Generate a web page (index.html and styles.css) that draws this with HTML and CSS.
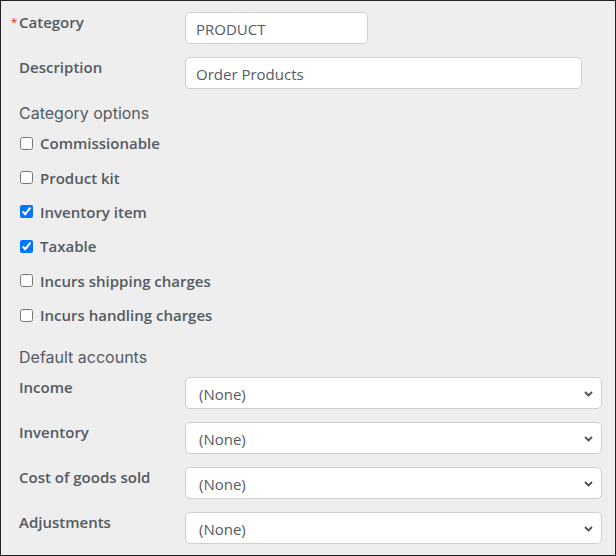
FILE: index.html
```html
<!DOCTYPE html>
<html lang="en">
<head>
<meta charset="utf-8">
<title>Category</title>
<link rel="stylesheet" href="styles.css">
</head>
<body>
<div class="panel">
  <div class="field">
    <label class="label required" for="cat">Category</label>
    <input id="cat" class="input input-short" type="text" value="PRODUCT">
  </div>
  <div class="field">
    <label class="label" for="desc">Description</label>
    <input id="desc" class="input input-long" type="text" value="Order Products">
  </div>

  <h3 class="section">Category options</h3>
  <ul class="checks">
    <li class="check"><input type="checkbox" id="c1"><label for="c1">Commissionable</label></li>
    <li class="check"><input type="checkbox" id="c2"><label for="c2">Product kit</label></li>
    <li class="check"><input type="checkbox" id="c3" checked><label for="c3">Inventory item</label></li>
    <li class="check"><input type="checkbox" id="c4" checked><label for="c4">Taxable</label></li>
    <li class="check"><input type="checkbox" id="c5"><label for="c5">Incurs shipping charges</label></li>
    <li class="check"><input type="checkbox" id="c6"><label for="c6">Incurs handling charges</label></li>
  </ul>

  <h3 class="section section-accounts">Default accounts</h3>
  <div class="field">
    <label class="label" for="s1">Income</label>
    <div class="select-wrap">
      <select id="s1" class="select"><option>(None)</option></select>
      <svg class="chev" width="9" height="6" viewBox="0 0 9 6"><path d="M1 1 L4.5 4.5 L8 1" fill="none" stroke="#4a4f57" stroke-width="1.8"/></svg>
    </div>
  </div>
  <div class="field">
    <label class="label" for="s2">Inventory</label>
    <div class="select-wrap">
      <select id="s2" class="select"><option>(None)</option></select>
      <svg class="chev" width="9" height="6" viewBox="0 0 9 6"><path d="M1 1 L4.5 4.5 L8 1" fill="none" stroke="#4a4f57" stroke-width="1.8"/></svg>
    </div>
  </div>
  <div class="field">
    <label class="label" for="s3">Cost of goods sold</label>
    <div class="select-wrap">
      <select id="s3" class="select"><option>(None)</option></select>
      <svg class="chev" width="9" height="6" viewBox="0 0 9 6"><path d="M1 1 L4.5 4.5 L8 1" fill="none" stroke="#4a4f57" stroke-width="1.8"/></svg>
    </div>
  </div>
  <div class="field">
    <label class="label" for="s4">Adjustments</label>
    <div class="select-wrap">
      <select id="s4" class="select"><option>(None)</option></select>
      <svg class="chev" width="9" height="6" viewBox="0 0 9 6"><path d="M1 1 L4.5 4.5 L8 1" fill="none" stroke="#4a4f57" stroke-width="1.8"/></svg>
    </div>
  </div>
</div>
</body>
</html>
```

FILE: styles.css
```css
* { box-sizing: border-box; }

html, body {
  margin: 0;
  padding: 0;
  background: #eeeeee;
}

body {
  font-family: "Open Sans", "Liberation Sans", sans-serif;
  color: #555b63;
}

.panel {
  width: 616px;
  height: 556px;
  border: 1px solid #222;
  background: #eeeeee;
  padding: 11px 14px 0 18px;
}

.field {
  display: grid;
  grid-template-columns: 166px 1fr;
  align-items: start;
  margin-bottom: 13px;
}

.label {
  position: relative;
  font-size: 15px;
  font-weight: 600;
  line-height: 20px;
  color: #545a62;
}

.required::before {
  content: "*";
  position: absolute;
  left: -8px;
  top: 0;
  color: #e0201c;
  font-size: 11px;
  font-weight: 400;
}

.input,
.select {
  height: 32px;
  border: 1px solid #cfcfcf;
  border-radius: 5px;
  background: #fff;
  font-family: "Open Sans", "Liberation Sans", sans-serif;
  font-size: 15px;
  color: #555b63;
  outline: none;
}

.input {
  padding: 1px 10px 0;
}

.input-short { width: 183px; }
.input-long { width: 397px; }

.section {
  margin: 13px 0 2px;
  font-family: "Inter", "Lato", sans-serif;
  font-size: 16px;
  font-weight: 400;
  line-height: 22px;
  color: #555b63;
}

.section-accounts {
  margin: 14px 0 9px;
}

.checks {
  list-style: none;
  margin: 0;
  padding: 0;
}

.check {
  height: 34.4px;
  display: flex;
  align-items: center;
}

.check input {
  width: 13px;
  height: 13px;
  margin: 0 7px 0 1px;
  accent-color: #0075ff;
}

.check label {
  font-size: 15px;
  font-weight: 600;
  line-height: 20px;
  color: #545a62;
}

.select-wrap {
  position: relative;
  width: 417px;
}

.select {
  width: 100%;
  appearance: none;
  -webkit-appearance: none;
  padding: 2px 13px 0;
}

.chev {
  position: absolute;
  right: 9px;
  top: 14px;
  pointer-events: none;
}
```
